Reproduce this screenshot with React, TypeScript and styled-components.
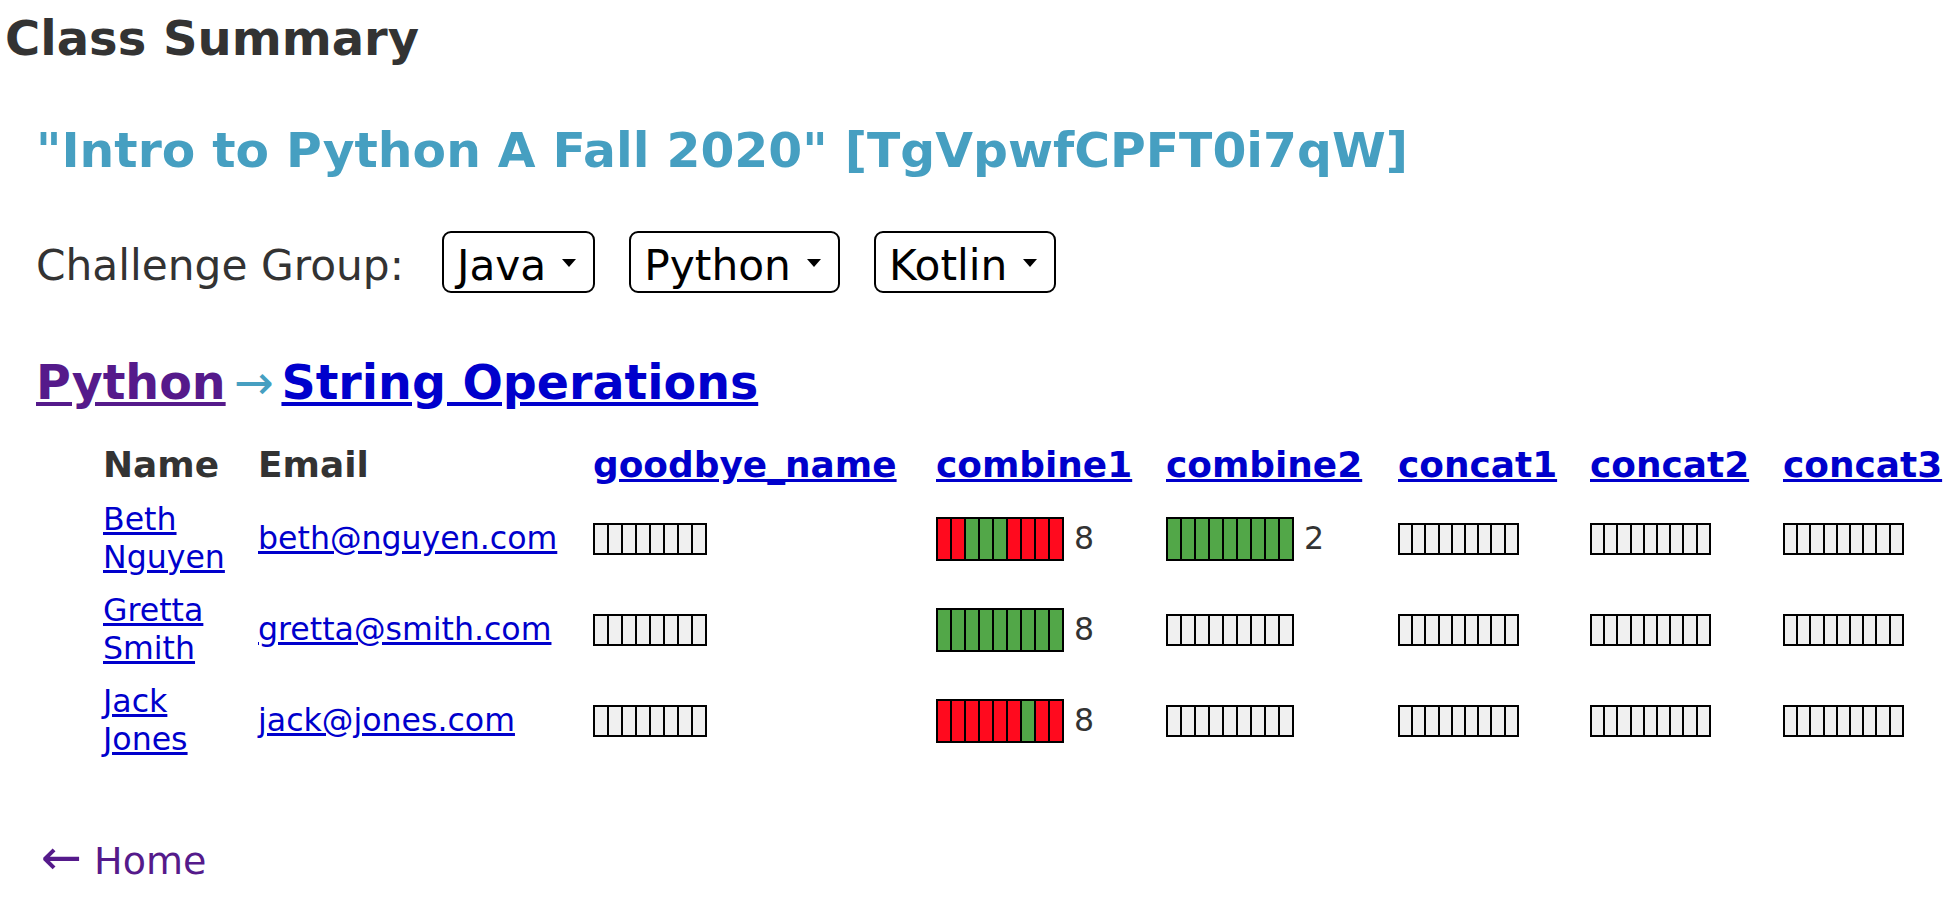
import React from "react";
import styled, { createGlobalStyle } from "styled-components";

const GlobalStyle = createGlobalStyle`
  html, body {
    margin: 0;
    padding: 0;
    background: #ffffff;
    overflow: hidden;
  }
  body {
    font-family: "DejaVu Sans", Verdana, sans-serif;
    color: #333333;
    font-size: 31.6px;
  }
`;

const Page = styled.div`
  padding: 10px 0 0 5px;
`;

const PageTitle = styled.h1`
  margin: 0;
  font-size: 48px;
  line-height: 56px;
  font-weight: bold;
  color: #333333;
`;

const Main = styled.div`
  margin-left: 31px;
`;

const ClassTitle = styled.h2`
  margin: 57px 0 0;
  font-size: 48.8px;
  line-height: 56px;
  font-weight: bold;
  color: #469fc1;
  white-space: nowrap;
`;

const GroupRow = styled.div`
  margin-top: 52px;
  display: flex;
  align-items: baseline;
`;

const GroupLabel = styled.span`
  font-size: 42.3px;
  color: #333333;
  margin-right: 38px;
`;

const SelectBox = styled.div`
  box-sizing: border-box;
  height: 62px;
  display: inline-flex;
  align-items: center;
  gap: 16px;
  padding: 6px 17px 0 13px;
  margin-right: 34px;
  border: 2px solid #000000;
  border-radius: 9px;
  font-size: 42.3px;
  color: #000000;
  cursor: pointer;
`;

const Caret = styled.span`
  width: 0;
  height: 0;
  border-left: 7px solid transparent;
  border-right: 7px solid transparent;
  border-top: 8px solid #000000;
  margin-top: -4px;
`;

const Crumbs = styled.h3`
  margin: 62px 0 0;
  font-size: 47.5px;
  line-height: 56px;
  font-weight: bold;
  white-space: nowrap;
`;

const CrumbLink = styled.a<{ $visited?: boolean }>`
  color: ${(p) => (p.$visited ? "#551a8b" : "#0000cc")};
  text-decoration: underline;
`;

const CrumbArrow = styled.span`
  color: #469fc1;
  font-weight: normal;
  margin: 0 8px;
`;

const Table = styled.table`
  margin: 25px 0 0 50px;
  border-collapse: separate;
  border-spacing: 0;
  table-layout: fixed;
  width: 1875px;
`;

const Col = styled.col<{ $w: number }>`
  width: ${(p) => p.$w}px;
`;

const HeadCell = styled.th`
  padding: 8px 0 7px 17px;
  text-align: left;
  font-size: 35.9px;
  line-height: 42px;
  font-weight: bold;
  color: #333333;
  white-space: nowrap;
`;

const HeadLink = styled.a`
  color: #0000cc;
  text-decoration: underline;
`;

const Cell = styled.td`
  padding: 8px 0 8px 17px;
  vertical-align: middle;
  font-size: 31.6px;
  line-height: 37.5px;
`;

const PlainLink = styled.a`
  color: #0000cc;
  text-decoration: underline;
`;

const Progress = styled.div`
  display: flex;
  align-items: center;
`;

const Bar = styled.div<{ $filled: boolean }>`
  display: flex;
  height: ${(p) => (p.$filled ? 44 : 32)}px;
  box-sizing: border-box;
  border: 2px solid #000000;
`;

const Slot = styled.div<{ $state: "pass" | "fail" | "none"; $w: number }>`
  width: ${(p) => p.$w}px;
  background: ${(p) =>
    p.$state === "pass" ? "#52a748" : p.$state === "fail" ? "#ff0a1e" : "#f0f0f0"};
  & + & {
    border-left: 2px solid #000000;
  }
`;

const Count = styled.span`
  margin-left: 10px;
  font-size: 31.6px;
  color: #333333;
`;

const HomeLink = styled.a`
  display: inline-flex;
  align-items: baseline;
  margin: 70px 0 0 5px;
  font-size: 38px;
  color: #551a8b;
  text-decoration: none;
`;

const HomeArrow = styled.span`
  font-size: 49px;
  line-height: 44px;
  margin-right: 12px;
`;

type S = "pass" | "fail" | "none";

const columns = [
  { name: "goodbye_name", slots: 8, w: 12 },
  { name: "combine1", slots: 9, w: 12 },
  { name: "combine2", slots: 9, w: 12 },
  { name: "concat1", slots: 9, w: 11.2 },
  { name: "concat2", slots: 9, w: 11.2 },
  { name: "concat3", slots: 9, w: 11.2 },
];

const P: S = "pass";
const F: S = "fail";

const students: {
  first: string;
  last: string;
  email: string;
  results: Record<string, { slots: S[]; count: number }>;
}[] = [
  {
    first: "Beth",
    last: "Nguyen",
    email: "beth@nguyen.com",
    results: {
      combine1: { slots: [F, F, P, P, P, F, F, F, F], count: 8 },
      combine2: { slots: [P, P, P, P, P, P, P, P, P], count: 2 },
    },
  },
  {
    first: "Gretta",
    last: "Smith",
    email: "gretta@smith.com",
    results: {
      combine1: { slots: [P, P, P, P, P, P, P, P, P], count: 8 },
    },
  },
  {
    first: "Jack",
    last: "Jones",
    email: "jack@jones.com",
    results: {
      combine1: { slots: [F, F, F, F, F, F, P, F, F], count: 8 },
    },
  },
];

const colWidths = [155, 335, 343, 230, 232, 192, 193, 195];

export default function App() {
  return (
    <>
      <GlobalStyle />
      <Page>
        <PageTitle>Class Summary</PageTitle>
        <Main>
          <ClassTitle>"Intro to Python A Fall 2020" [TgVpwfCPFT0i7qW]</ClassTitle>
          <GroupRow>
            <GroupLabel>Challenge Group:</GroupLabel>
            {["Java", "Python", "Kotlin"].map((g) => (
              <SelectBox key={g}>
                <span>{g}</span>
                <Caret />
              </SelectBox>
            ))}
          </GroupRow>
          <Crumbs>
            <CrumbLink $visited href="#">
              Python
            </CrumbLink>
            <CrumbArrow>→</CrumbArrow>
            <CrumbLink href="#">String Operations</CrumbLink>
          </Crumbs>
          <Table>
            <colgroup>
              {colWidths.map((w, i) => (
                <Col key={i} $w={w} />
              ))}
            </colgroup>
            <thead>
              <tr>
                <HeadCell>Name</HeadCell>
                <HeadCell>Email</HeadCell>
                {columns.map((c) => (
                  <HeadCell key={c.name}>
                    <HeadLink href="#">{c.name}</HeadLink>
                  </HeadCell>
                ))}
              </tr>
            </thead>
            <tbody>
              {students.map((s) => (
                <tr key={s.email}>
                  <Cell>
                    <PlainLink href="#">
                      {s.first} {s.last}
                    </PlainLink>
                  </Cell>
                  <Cell>
                    <PlainLink href="#">{s.email}</PlainLink>
                  </Cell>
                  {columns.map((c) => {
                    const r = s.results[c.name];
                    const slots: S[] = r
                      ? r.slots
                      : Array.from({ length: c.slots }, () => "none" as S);
                    return (
                      <Cell key={c.name}>
                        <Progress>
                          <Bar $filled={!!r}>
                            {slots.map((st, i) => (
                              <Slot key={i} $state={st} $w={c.w} />
                            ))}
                          </Bar>
                          {r && <Count>{r.count}</Count>}
                        </Progress>
                      </Cell>
                    );
                  })}
                </tr>
              ))}
            </tbody>
          </Table>
          <HomeLink href="#">
            <HomeArrow>←</HomeArrow>Home
          </HomeLink>
        </Main>
      </Page>
    </>
  );
}
